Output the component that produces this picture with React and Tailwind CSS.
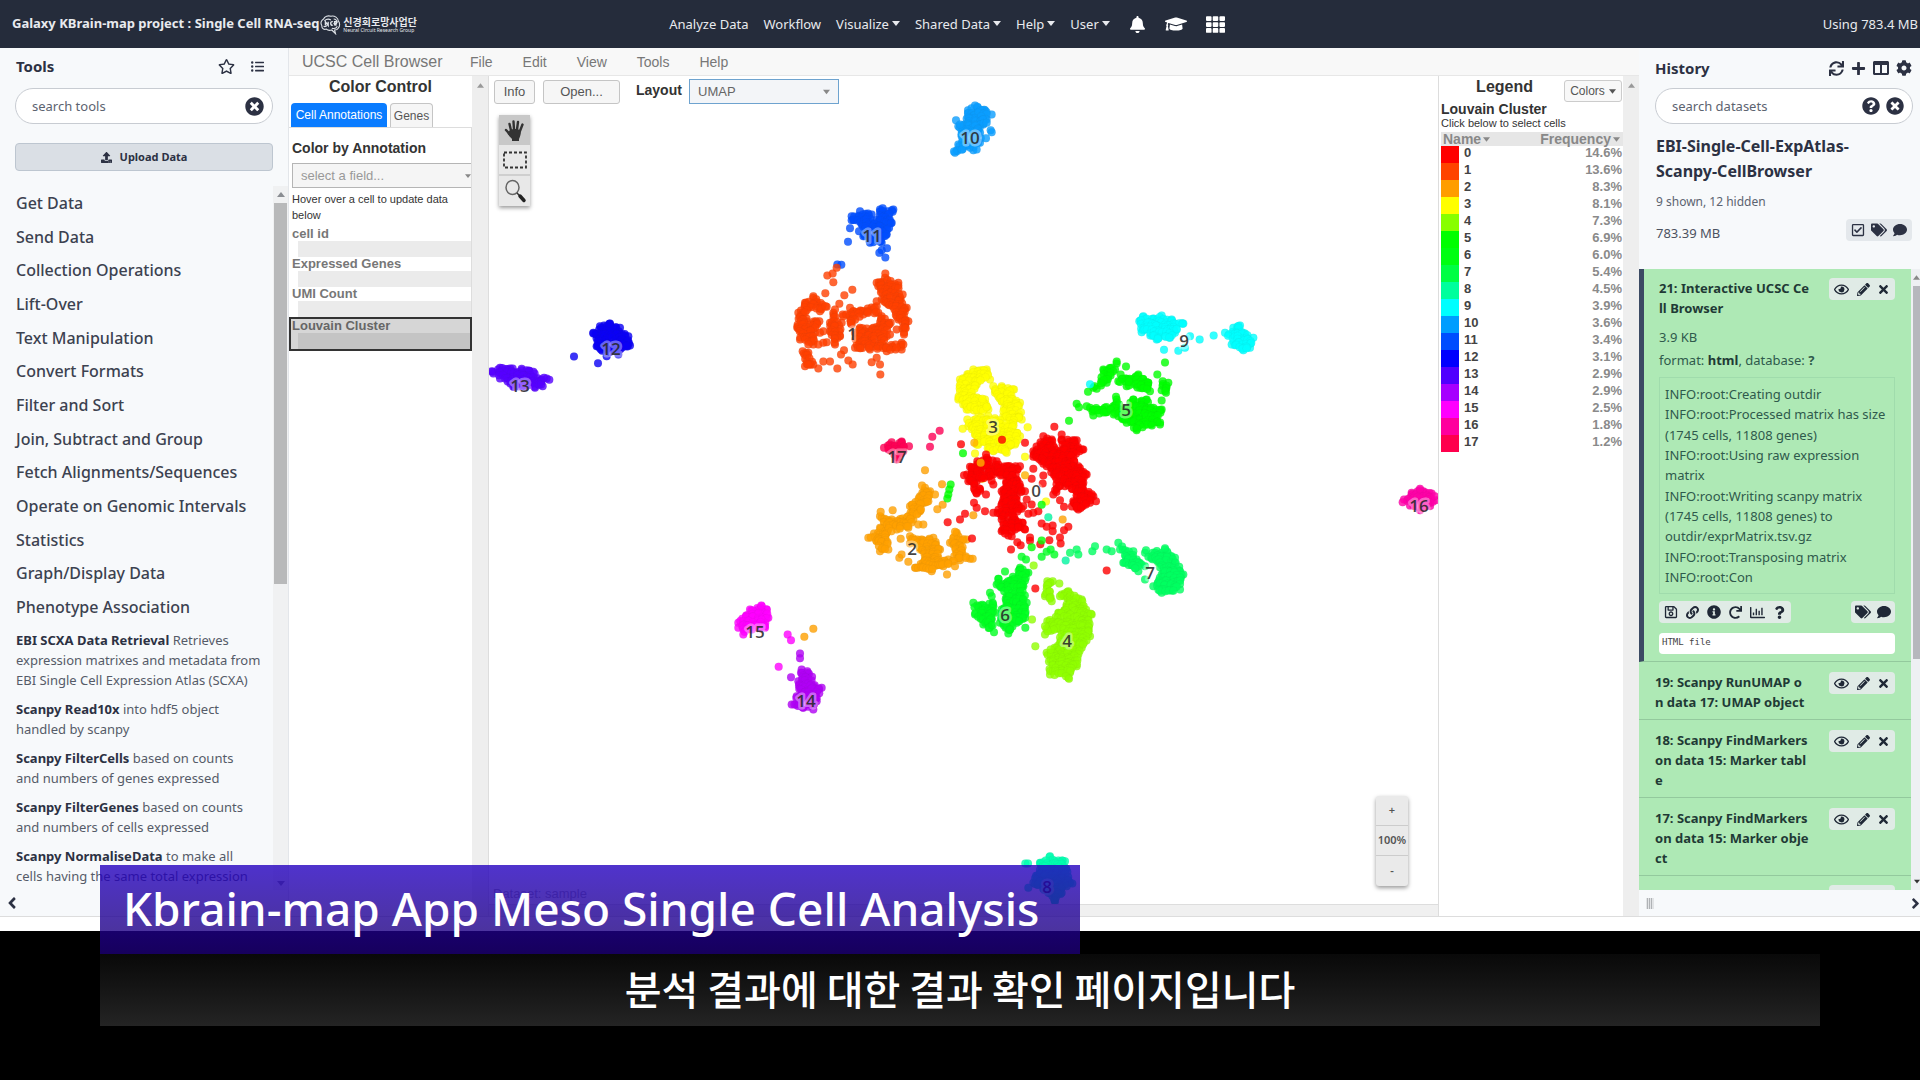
import React from "react";
import {
  FaAngleLeft,
  FaAngleRight,
  FaBell,
  FaColumns,
  FaCog,
  FaComment,
  FaGraduationCap,
  FaInfoCircle,
  FaLink,
  FaListUl,
  FaPencilAlt,
  FaPlus,
  FaQuestion,
  FaQuestionCircle,
  FaRedo,
  FaRegChartBar,
  FaRegCheckSquare,
  FaRegEye,
  FaRegSave,
  FaRegStar,
  FaSync,
  FaTags,
  FaTh,
  FaTimes,
  FaTimesCircle,
  FaUpload,
} from "react-icons/fa";

/* ------------------------------------------------------------------ data */

const toolSections = [
  "Get Data",
  "Send Data",
  "Collection Operations",
  "Lift-Over",
  "Text Manipulation",
  "Convert Formats",
  "Filter and Sort",
  "Join, Subtract and Group",
  "Fetch Alignments/Sequences",
  "Operate on Genomic Intervals",
  "Statistics",
  "Graph/Display Data",
  "Phenotype Association",
];

const tools = [
  ["EBI SCXA Data Retrieval", "Retrieves", "expression matrixes and metadata from", "EBI Single Cell Expression Atlas (SCXA)"],
  ["Scanpy Read10x", "into hdf5 object", "handled by scanpy"],
  ["Scanpy FilterCells", "based on counts", "and numbers of genes expressed"],
  ["Scanpy FilterGenes", "based on counts", "and numbers of cells expressed"],
  ["Scanpy NormaliseData", "to make all", "cells having the same total expression"],
];

const legend = [
  ["0", "14.6%", "#ff0000"],
  ["1", "13.6%", "#ff4400"],
  ["2", "8.3%", "#ff9d00"],
  ["3", "8.1%", "#ffff00"],
  ["4", "7.3%", "#88ff00"],
  ["5", "6.9%", "#00ff00"],
  ["6", "6.0%", "#00ff11"],
  ["7", "5.4%", "#00ff44"],
  ["8", "4.5%", "#00ff9d"],
  ["9", "3.9%", "#00ffff"],
  ["10", "3.6%", "#009dff"],
  ["11", "3.4%", "#004dff"],
  ["12", "3.1%", "#0000ff"],
  ["13", "2.9%", "#5000ff"],
  ["14", "2.9%", "#a600ff"],
  ["15", "2.5%", "#ff00ff"],
  ["16", "1.8%", "#ff009d"],
  ["17", "1.2%", "#ff004d"],
];

const logLines = [
  "INFO:root:Creating outdir",
  "INFO:root:Processed matrix has size",
  "(1745 cells, 11808 genes)",
  "INFO:root:Using raw expression",
  "matrix",
  "INFO:root:Writing scanpy matrix",
  "(1745 cells, 11808 genes) to",
  "outdir/exprMatrix.tsv.gz",
  "INFO:root:Transposing matrix",
  "INFO:root:Con",
];

const datasets = [
  ["19: Scanpy RunUMAP o", "n data 17: UMAP object"],
  ["18: Scanpy FindMarkers", "on data 15: Marker tabl", "e"],
  ["17: Scanpy FindMarkers", "on data 15: Marker obje", "ct"],
];

/*
 * UMAP groups. Areas are filled with evenly scattered cells, points are single
 * cells. Coordinates are thirds of a pixel from each group's origin.
 */
const A = [480, 200];
const B = [860, 320];
const C = [700, 560];

const groups = [
  { color: "#0a9dff", at: [940, 90], areas: [
    [[84, 62], [105, 48], [135, 62], [155, 75], [140, 90], [130, 105], [120, 160], [100, 182], [45, 190], [55, 165], [65, 140], [55, 110], [80, 88]],
  ], points: [[48, 92], [60, 105], [152, 122], [155, 128], [138, 146], [110, 180], [42, 186], [140, 100]] },
  { color: "#004dff", at: A, areas: [
    [[1115, 50], [1140, 35], [1175, 45], [1180, 75], [1200, 30], [1240, 30], [1235, 70], [1220, 105], [1205, 130], [1170, 130], [1150, 110], [1145, 75], [1115, 62]],
  ], points: [[1110, 86], [1137, 95], [1104, 127], [1221, 146], [1205, 152], [1198, 160], [1216, 174], [1072, 195], [1084, 196], [1208, 26]] },
  { color: "#ff4000", at: A, areas: [
    [[1000, 290], [1040, 322], [1020, 335], [985, 325], [980, 365], [1018, 365], [1005, 400], [1000, 435], [960, 420], [952, 385], [955, 340], [975, 310]],
    [[1060, 340], [1085, 370], [1080, 410], [1065, 435], [1050, 395], [1050, 370]],
    [[1088, 345], [1120, 335], [1190, 320], [1195, 340], [1150, 345], [1115, 375], [1090, 350]],
    [[1190, 250], [1215, 235], [1255, 250], [1262, 300], [1280, 325], [1285, 365], [1272, 400], [1255, 360], [1225, 315], [1205, 300]],
    [[1140, 385], [1180, 385], [1205, 350], [1232, 370], [1220, 410], [1215, 440], [1265, 430], [1265, 450], [1220, 455], [1170, 450], [1125, 445], [1125, 400]],
    [[968, 455], [985, 460], [1000, 495], [975, 500]],
  ], points: [[1042, 228], [1058, 222], [1060, 248], [1070, 205], [1036, 281], [1117, 271], [1093, 287], [1216, 222], [1078, 313], [1065, 330], [1110, 325], [1030, 395], [1020, 400], [1015, 435], [1040, 428], [1092, 452], [1083, 465], [1105, 483], [1118, 495], [1072, 507], [1015, 507], [1030, 486], [1050, 486], [1175, 488], [1190, 475], [1200, 495], [1201, 525], [1230, 405], [1250, 390], [1268, 285], [985, 435], [1190, 305], [1030, 430], [1272, 405], [1270, 435]] },
  { color: "#0a00f5", at: A, areas: [
    [[340, 400], [360, 380], [390, 372], [420, 385], [445, 410], [450, 438], [420, 450], [380, 470], [350, 440]],
  ], points: [[282, 471], [354, 491], [388, 373], [340, 402], [415, 465]] },
  { color: "#5500ff", at: A, areas: [
    [[35, 515], [60, 505], [98, 507], [105, 520], [125, 508], [160, 517], [185, 540], [188, 560], [165, 565], [100, 562], [60, 537], [40, 522]],
  ], points: [[200, 537], [208, 541], [192, 535]] },
  { color: "#ff0055", at: A, areas: [
    [[1212, 745], [1235, 728], [1265, 726], [1287, 740], [1270, 755], [1250, 780], [1230, 752]],
  ], points: [[1379, 694], [1357, 712], [1350, 742]] },
  { color: "#ffa000", at: B, areas: [
    [[60, 590], [95, 600], [145, 590], [150, 560], [180, 530], [195, 505], [210, 515], [205, 545], [180, 575], [160, 600], [145, 625], [110, 630], [80, 640], [85, 690], [60, 695], [50, 665], [25, 655], [60, 625]],
    [[150, 650], [185, 660], [220, 655], [240, 690], [235, 715], [265, 720], [290, 700], [270, 670], [290, 640], [320, 660], [305, 690], [330, 718], [300, 722], [250, 740], [215, 755], [165, 745], [195, 720], [180, 690], [150, 672]],
  ], points: [[195, 452], [186, 498], [246, 494], [225, 525], [248, 556], [232, 569], [183, 570], [98, 572], [62, 577], [175, 615], [190, 615], [122, 658], [118, 715], [145, 727], [125, 705], [261, 765], [285, 637], [340, 587], [608, 600], [338, 718], [285, 740]] },
  { color: "#ffa000", at: C, areas: [], points: [[340, 208], [313, 232]] },
  { color: "#ffff00", at: B, areas: [
    [[300, 180], [340, 150], [380, 150], [390, 180], [350, 195], [335, 225], [375, 240], [385, 270], [355, 280], [320, 270], [295, 240]],
    [[400, 200], [425, 200], [462, 210], [450, 225], [480, 250], [485, 300], [455, 310], [430, 290], [425, 245], [405, 220]],
    [[322, 300], [385, 290], [460, 310], [480, 350], [465, 375], [440, 400], [400, 395], [350, 375], [345, 345], [325, 320]],
  ], points: [[308, 328], [503, 323], [345, 402], [495, 412], [558, 546], [367, 478], [367, 238], [380, 262]] },
  { color: "#ff0000", at: B, areas: [
    [[330, 442], [380, 415], [410, 425], [405, 455], [400, 495], [385, 470], [350, 485], [378, 525], [350, 522], [325, 485], [312, 467]],
    [[415, 435], [440, 440], [480, 440], [470, 480], [495, 515], [470, 530], [490, 560], [465, 600], [425, 590], [400, 580], [430, 540], [425, 515], [440, 490], [410, 455]],
    [[520, 395], [550, 350], [575, 360], [600, 395], [605, 360], [650, 362], [670, 390], [640, 410], [655, 440], [680, 465], [670, 490], [700, 530], [690, 550], [655, 570], [612, 562], [640, 545], [650, 515], [615, 500], [580, 525], [590, 480], [560, 440], [520, 412]],
    [[425, 600], [460, 602], [488, 610], [495, 630], [465, 630], [445, 648], [425, 635]],
  ], points: [[583, 322], [605, 345], [495, 370], [303, 374], [426, 361], [352, 425], [520, 448], [550, 468], [515, 478], [548, 492], [500, 540], [515, 555], [600, 542], [342, 550], [350, 565], [375, 575], [315, 583], [300, 600], [263, 608], [336, 657], [505, 583], [520, 580], [535, 575], [545, 612], [560, 622], [578, 618], [578, 635], [625, 622], [612, 632], [472, 668], [482, 677], [510, 654], [510, 664], [541, 674], [568, 662], [600, 654], [602, 672], [453, 690], [740, 753], [526, 807], [455, 650], [708, 545], [435, 642], [378, 405]] },
  { color: "#ffb000", at: B, areas: [], points: [[362, 430], [495, 467], [343, 370]] },
  { color: "#90ff00", at: B, areas: [
    [[562, 785], [578, 785], [575, 845], [555, 830]],
    [[605, 825], [625, 815], [665, 840], [695, 885], [690, 950], [665, 985], [650, 1040], [630, 1060], [625, 1075], [570, 1065], [560, 1000], [600, 970], [600, 930], [555, 945], [562, 905], [595, 880], [620, 855]],
  ], points: [[598, 792], [516, 900], [526, 980], [521, 738], [600, 830], [627, 1078], [555, 920], [572, 990]] },
  { color: "#00ff00", at: B, areas: [
    [[700, 205], [730, 150], [770, 132], [765, 150], [740, 190], [710, 208]],
    [[782, 165], [800, 178], [835, 165], [865, 190], [870, 215], [840, 205], [800, 200], [775, 185]],
    [[908, 185], [925, 190], [918, 220], [905, 212]],
    [[820, 240], [860, 240], [880, 265], [905, 270], [900, 315], [830, 332], [800, 310], [775, 290], [740, 278], [700, 288], [690, 265], [760, 260], [770, 240], [790, 270]],
  ], points: [[770, 126], [798, 141], [892, 165], [905, 243], [768, 232], [650, 253], [657, 263], [680, 260], [684, 217], [915, 129], [627, 304], [272, 495], [268, 510], [265, 525], [262, 537], [309, 401], [545, 556], [515, 683], [545, 663]] },
  { color: "#00ff20", at: B, areas: [
    [[340, 850], [398, 850], [405, 880], [395, 900], [402, 938], [370, 915], [345, 885]],
    [[415, 778], [440, 790], [480, 745], [505, 760], [490, 800], [500, 850], [495, 895], [470, 910], [445, 942], [420, 910], [425, 870], [440, 830], [410, 795]],
  ], points: [[435, 756], [496, 925], [390, 820], [395, 830], [485, 712], [498, 720], [545, 712], [560, 697], [572, 690], [583, 705]] },
  { color: "#00ff60", at: B, areas: [
    [[775, 670], [820, 695], [830, 720], [855, 740], [835, 755], [790, 730]],
    [[855, 700], [915, 690], [945, 715], [970, 765], [960, 810], [905, 820], [880, 800], [905, 765], [895, 730], [865, 712]],
  ], points: [[630, 700], [650, 690], [655, 705], [697, 695], [705, 680], [740, 690], [755, 695], [855, 780], [915, 686], [858, 692]] },
  { color: "#00f5a0", at: B, areas: [], points: [[565, 593], [617, 723]] },
  { color: "#00ffff", at: B, areas: [
    [[838, 5], [850, -10], [880, -3], [905, -12], [935, 0], [970, 12], [945, 40], [930, 55], [890, 60], [845, 38]],
    [[1095, 40], [1120, 25], [1140, 18], [1155, 42], [1180, 55], [1170, 85], [1150, 92], [1115, 75]],
  ], points: [[912, 91], [955, 94], [975, 85], [1019, 60], [1061, 48], [990, 50], [690, 194]] },
  { color: "#b000f5", at: C, areas: [
    [[305, 330], [322, 335], [365, 385], [350, 425], [340, 450], [310, 445], [275, 435], [290, 410], [295, 365]],
  ], points: [[300, 282], [300, 296], [273, 353]] },
  { color: "#ff00ff", at: C, areas: [
    [[115, 190], [150, 150], [185, 140], [200, 150], [205, 175], [195, 205], [130, 225], [115, 205]],
  ], points: [[263, 225], [273, 242], [236, 322], [184, 138]] },
  { color: "#00ffb0", at: C, areas: [
    [[1050, 890], [1095, 905], [1110, 970], [1085, 1000], [1065, 1025], [1045, 1000], [1000, 970], [1020, 910]],
  ], points: [[976, 912], [984, 912], [1117, 972], [985, 985]] },
  { color: "#ff00a8", at: [1400, 480], areas: [
    [[12, 60], [35, 40], [60, 32], [95, 42], [108, 62], [90, 80], [60, 92], [30, 78]],
  ], points: [[8, 68], [60, 28], [104, 50]] },
];

const labels = [
  ["0", 1036, 490], ["1", 852, 333], ["2", 912, 548], ["3", 993, 426], ["4", 1067, 640],
  ["5", 1126, 409], ["6", 1005, 614], ["7", 1150, 572], ["8", 1047, 886], ["9", 1184, 340],
  ["10", 970, 137], ["11", 872, 235], ["12", 611, 348], ["13", 520, 385], ["14", 806, 700],
  ["15", 755, 631], ["16", 1419, 505], ["17", 897, 456],
];

function inside(poly, x, y) {
  let hit = false;
  for (let i = 0, j = poly.length - 1; i < poly.length; j = i++) {
    const [xi, yi] = poly[i];
    const [xj, yj] = poly[j];
    if (yi > y !== yj > y && x < ((xj - xi) * (y - yi)) / (yj - yi) + xi) hit = !hit;
  }
  return hit;
}

/* Jittered grid of cells inside a polygon, plus its corners. */
function scatter(poly, seed) {
  let s = seed;
  const rnd = () => ((s = (s * 16807) % 2147483647) / 2147483647);
  const xs = poly.map((p) => p[0]);
  const ys = poly.map((p) => p[1]);
  const out = [...poly];
  const step = 9;
  for (let y = Math.min(...ys); y <= Math.max(...ys); y += step)
    for (let x = Math.min(...xs); x <= Math.max(...xs); x += step) {
      const px = x + (rnd() - 0.5) * 12;
      const py = y + (rnd() - 0.5) * 12;
      if (inside(poly, px, py)) out.push([px, py]);
    }
  return out;
}

/* ------------------------------------------------------------ components */

function Umap() {
  return (
    <svg className="absolute inset-0 h-full w-full" viewBox="489 77 949 827" role="img" aria-label="UMAP scatter plot of Louvain clusters">
      {groups.map((g, gi) => (
        <g key={gi} fill={g.color} fillOpacity="0.8" stroke="#404040" strokeOpacity="0.04">
          {[...g.areas.flatMap((a, ai) => scatter(a, 97 + gi * 31 + ai * 7)), ...g.points].map(([x, y], i) => (
            <circle key={i} cx={g.at[0] + x / 3} cy={g.at[1] + y / 3} r="4" />
          ))}
        </g>
      ))}
      <g className="font-['Open_Sans',sans-serif] text-[17px] font-semibold" fill="#222222" fillOpacity="0.85" stroke="#ffffff" strokeOpacity="0.4" strokeWidth="5" strokeLinejoin="round" textAnchor="middle">
        {labels.map(([t, x, y]) => (
          <text key={t} x={x} y={y + 7} paintOrder="stroke">
            {t}
          </text>
        ))}
      </g>
    </svg>
  );
}

function IconButton({ label, children, className = "" }) {
  return (
    <button type="button" aria-label={label} className={`flex items-center justify-center ${className}`}>
      {children}
    </button>
  );
}

function Arrow({ dir = "down", className = "" }) {
  return (
    <svg viewBox="0 0 8 5" className={`h-[5px] w-2 shrink-0 ${className}`} fill="currentColor" aria-hidden="true">
      <path d={dir === "down" ? "M0 0h8L4 5z" : "M0 5h8L4 0z"} />
    </svg>
  );
}

function Masthead() {
  return (
    <header className="flex h-12 shrink-0 items-center bg-[#252c3b] pt-[2px] text-[13px] text-[#e8eaee]">
      <a href="#home" className="flex flex-1 items-center pb-[2px] pl-3 font-bold">
        <span className="whitespace-nowrap">Galaxy KBrain-map project : Single Cell RNA-seq</span>
        <svg viewBox="0 0 24 22" className="h-[21px] w-[22px] shrink-0" fill="none" stroke="#dfe3e8" strokeWidth="1.2" aria-hidden="true">
          <path d="M3 12c-2-3 0-6 2-7 1-3 5-4 8-3 4-1 8 2 8 5 2 2 2 6 0 8-1 2-3 2-4 2l1 4-4-4c-3 1-5 0-6-1-3 1-5-1-5-4z" />
          <path d="M6 7c2-2 5-2 7-1M16 5c2 0 4 2 4 4M5 13c2 1 3 0 4-1M14 15c3 1 5 0 6-2" />
          <path d="M7 12V8l3 4V8M15 8c-3-1-3 4 0 4M17 12V8h2v2h-2l2 2" strokeWidth="1.5" />
        </svg>
        <span className="ml-[2px] flex flex-col whitespace-nowrap">
          <span className="font-['Noto_Sans_CJK_KR',sans-serif] text-[10px] leading-[11px]">신경회로망사업단</span>
          <span className="text-[5px] font-normal leading-[6px]">Neural Circuit Research Group</span>
        </span>
      </a>
      <nav className="mr-9 flex items-center gap-[15px] whitespace-nowrap">
        <a href="#analyze">Analyze Data</a>
        <a href="#workflow">Workflow</a>
        {["Visualize", "Shared Data", "Help", "User"].map((t) => (
          <button type="button" key={t} className="flex items-center gap-[3px]">
            {t}
            <Arrow className="mb-1" />
          </button>
        ))}
        <span className="flex items-center gap-[19px] pb-[2px] pl-1 text-white">
          <IconButton label="Notifications"><FaBell size={17} /></IconButton>
          <IconButton label="Interactive tours"><FaGraduationCap size={22} /></IconButton>
          <IconButton label="Scratchbook"><FaTh size={19} /></IconButton>
        </span>
      </nav>
      <div className="flex-1 pr-[2px] text-right">Using 783.4 MB</div>
    </header>
  );
}

function ToolPanel() {
  return (
    <aside className="flex w-[289px] shrink-0 flex-col border-r border-[#e3e6ea] bg-[#f7f9fb] text-[13px] text-[#2c3143]">
      <div className="mb-1 flex h-9 items-center pl-4 pr-6">
        <h2 className="flex-1 text-[15px] font-bold">Tools</h2>
        <IconButton label="Favorites"><FaRegStar size={17} /></IconButton>
        <IconButton label="Tool list" className="ml-4"><FaListUl size={13} /></IconButton>
      </div>
      <div className="ml-[15px] mr-[15px] flex h-9 items-center rounded-full border border-[#c8ccd2] bg-white pl-4 pr-2">
        <input aria-label="search tools" placeholder="search tools" className="min-w-0 flex-1 bg-transparent pt-[2px] outline-none placeholder:text-[#5c6370]" />
        <IconButton label="Clear search"><FaTimesCircle size={19} /></IconButton>
      </div>
      <button type="button" className="ml-[15px] mr-[15px] mt-[19px] flex h-7 items-center justify-center gap-2 rounded-sm border border-[#bdc6d0] bg-[#dadfe5] text-[11px] font-bold">
        <FaUpload size={11} />
        Upload Data
      </button>
      <div className="mt-[15px] flex min-h-0 flex-1">
        <div className="min-w-0 flex-1 overflow-hidden pl-4">
          <ul className="grid h-[438px] auto-rows-fr items-center text-base font-medium text-[#3c4250]">
            {toolSections.map((t) => (
              <li key={t} className="whitespace-nowrap"><a href="#section">{t}</a></li>
            ))}
          </ul>
          <ul className="mt-[6px] flex flex-col gap-[9px] whitespace-nowrap leading-5 text-[#555b68]">
            {tools.map(([name, first, ...rest]) => (
              <li key={name}>
                <a href="#tool" className="font-bold text-[#2c3143]">{name}</a> {first}
                {rest.map((line) => (
                  <span key={line} className="block">{line}</span>
                ))}
              </li>
            ))}
          </ul>
        </div>
        <div className="flex w-[15px] flex-col items-center bg-[#f0f1f2] text-[#8a8d92]">
          <Arrow dir="up" className="my-[6px]" />
          <div className="h-[381px] w-[13px] bg-[#b8b9ba]" />
          <Arrow className="mb-1 mt-auto" />
        </div>
      </div>
      <div className="flex h-[26px] items-center pl-[3px]">
        <IconButton label="Collapse tools"><FaAngleLeft size={18} /></IconButton>
      </div>
    </aside>
  );
}

function ColorControl() {
  return (
    <section className="flex w-[200px] shrink-0 font-['Liberation_Sans',sans-serif] text-[#333]">
      <div className="flex min-w-0 flex-1 flex-col">
        <h2 className="h-[27px] text-center text-base font-bold leading-[22px]">Color Control</h2>
        <div role="tablist" className="flex gap-[3px] pl-[2px] text-xs">
          <button type="button" role="tab" aria-selected="true" className="h-6 w-[96px] rounded-t-sm bg-[#0a7cff] text-white">Cell Annotations</button>
          <button type="button" role="tab" aria-selected="false" className="h-6 w-[43px] rounded-t-sm border border-b-0 border-[#c5c5c5] bg-[#f6f6f6] text-[#555]">Genes</button>
        </div>
        <div className="border-r border-t border-[#ddd] pl-[3px]">
          <label htmlFor="field" className="block pt-3 text-sm font-bold leading-4">Color by Annotation</label>
          <div className="relative mt-[7px]">
            <select id="field" defaultValue="" className="h-[25px] w-full appearance-none border border-r-0 border-[#b5b5b5] bg-[#f5f5f5] pl-2 text-[13px] text-[#999]">
              <option value="">select a field...</option>
            </select>
            <Arrow className="pointer-events-none absolute right-0 top-[10px] h-[6px] w-[6px] text-[#888]" />
          </div>
          <p className="pb-1 pt-[3px] text-[11px] leading-4">Hover over a cell to update data below</p>
        </div>
        <dl className="text-[13px] font-bold text-[#777]">
          {["cell id", "Expressed Genes", "UMI Count"].map((t) => (
            <div key={t} className="border-r border-[#ddd]">
              <dt className="pl-[3px] leading-[14px]">{t}</dt>
              <dd className="ml-[9px] h-4 bg-[#ebebeb]" />
            </div>
          ))}
          <div className="border-2 border-[#333] bg-[#d6d6d6] text-[#666]">
            <dt className="pl-px leading-[14px]">Louvain Cluster</dt>
            <dd className="ml-[7px] h-4 bg-[#c4c4c4]" />
          </div>
        </dl>
      </div>
      <div className="flex w-[17px] justify-center border-r border-[#ddd] bg-[#eee] pt-[7px] text-[#999]">
        <Arrow dir="up" className="w-[7px]" />
      </div>
    </section>
  );
}

function PlotArea() {
  const btn = "border border-[#c5c5c5] bg-[#f6f6f6] rounded-[3px] h-6 text-[13px] text-[#555]";
  return (
    <section className="flex min-w-0 flex-1 flex-col font-['Liberation_Sans',sans-serif]">
      <div className="relative flex-1 overflow-hidden">
        <Umap />
        <div className="relative flex h-full flex-col pl-[5px] pt-[3px]">
          <div className="flex">
            <button type="button" className={`${btn} mt-px w-[41px]`}>Info</button>
            <button type="button" className={`${btn} ml-2 mt-px w-[77px]`}>Open...</button>
            <label htmlFor="layout" className="ml-4 w-[53px] text-sm font-bold leading-[22px] text-[#333]">Layout</label>
            <div className="relative">
              <select id="layout" className="h-[25px] w-[150px] appearance-none border border-[#6ea3cf] bg-[#f3f5f8] pl-2 text-[13px] text-[#666]">
                <option>UMAP</option>
              </select>
              <Arrow className="pointer-events-none absolute right-[9px] top-[10px] h-[6px] w-[7px] text-[#888]" />
            </div>
          </div>
          <div role="toolbar" aria-label="Mouse mode" className="ml-[5px] mt-[11px] flex w-[31px] flex-col bg-[#e8e8e8] shadow-[0_2px_4px_rgba(0,0,0,0.4)]">
            <IconButton label="Move" className="h-[30px] bg-[#c8c8c8]">
              <svg viewBox="0 0 22 22" className="h-[23px] w-[22px]" fill="none" stroke="#333" strokeLinecap="round" aria-hidden="true">
                <path d="M7 11 5.500 4.500M10 10 9.500 2M13 10l1-7.500M16 11.500l2.500-6.500M7 16 2 10.500" strokeWidth="2.400" />
                <path d="M6 10.500c3-1.500 7-1.500 11 .5 0 4-1 6-2 8.500v2H8v-2c-1-1.500-4-4-4.500-5.500z" fill="#333" stroke="none" />
              </svg>
            </IconButton>
            <IconButton label="Select rectangle" className="h-[29px]">
              <svg viewBox="0 0 24 18" className="h-[18px] w-6" fill="none" stroke="#333" strokeWidth="1.800" strokeDasharray="3 2" aria-hidden="true">
                <path d="M1 1.500h22v15H1z" />
              </svg>
            </IconButton>
            <IconButton label="Zoom" className="h-8 border-t-2 border-[#cfcfcf]">
              <svg viewBox="0 0 24 24" className="h-6 w-6" fill="none" aria-hidden="true">
                <ellipse cx="9.500" cy="8.500" rx="6.500" ry="7" stroke="#666" strokeWidth="1.500" />
                <path d="m14 14 3 3" stroke="#333" strokeWidth="1.500" />
                <path d="m17 17 4 4.500" stroke="#222" strokeWidth="3.500" strokeLinecap="round" />
              </svg>
            </IconButton>
          </div>
          <div className="mb-[18px] mr-[30px] mt-auto flex w-8 flex-col self-end rounded-[3px] bg-[#eaeaea] font-['Noto_Sans',sans-serif] text-[11px] font-semibold text-[#555] shadow-[0_2px_4px_rgba(0,0,0,0.4)]">
            <button type="button" aria-label="Zoom in" className="h-[30px] border-b border-[#ccc]">+</button>
            <button type="button" aria-label="Reset zoom" className="h-[30px] border-b border-[#ccc]">100%</button>
            <button type="button" aria-label="Zoom out" className="h-[30px]">-</button>
          </div>
          <p className="absolute bottom-0 left-1 text-[13px] leading-5 text-[#aaa]">Dataset: sample</p>
        </div>
      </div>
      <div className="h-3 border-t border-[#ddd] bg-[#f0f0f0]" />
    </section>
  );
}

function Legend() {
  return (
    <section className="flex w-[201px] shrink-0 border-l border-[#ddd] font-['Liberation_Sans',sans-serif] text-[#333]">
      <div className="min-w-0 flex-1 pl-[2px]">
        <div className="flex h-[26px] justify-end">
          <h2 className="mr-[31px] text-base font-bold leading-[22px]">Legend</h2>
          <button type="button" className="mr-px mt-1 flex h-[22px] w-[58px] items-center justify-center gap-1 rounded-[3px] border border-[#ccc] bg-[#f8f8f8] text-xs text-[#555]">
            Colors <Arrow className="h-1 w-[7px]" />
          </button>
        </div>
        <h3 className="text-sm font-bold leading-[14px]">Louvain Cluster</h3>
        <p className="pb-px text-[11px] leading-[14px]">Click below to select cells</p>
        <table className="mt-px w-full border-collapse text-[13px] font-bold leading-[13px]">
          <thead className="bg-[#e6e6e6] text-sm leading-[14px] text-[#888]">
            <tr>
              <th colSpan="2" className="p-0 pl-[2px] text-left">
                <button type="button" className="flex items-center gap-[2px]">Name <Arrow className="h-1 w-[7px]" /></button>
              </th>
              <th className="p-0 pr-[3px]">
                <button type="button" className="ml-auto flex items-center gap-[2px]">Frequency <Arrow className="h-1 w-[7px]" /></button>
              </th>
            </tr>
          </thead>
          <tbody>
            {legend.map(([name, freq, color]) => (
              <tr key={name} className="h-[17px] align-top">
                <td className="w-[18px] p-0" style={{ backgroundColor: color }} />
                <td className="p-0 pl-[5px] text-[#444]">{name}</td>
                <td className="p-0 pr-px text-right text-[#8a8a8a]">{freq}</td>
              </tr>
            ))}
          </tbody>
        </table>
      </div>
      <div className="flex w-4 justify-center bg-[#eee] pt-[7px] text-[#999]">
        <Arrow dir="up" className="w-[7px]" />
      </div>
    </section>
  );
}

function CellBrowser() {
  return (
    <main className="flex min-w-0 flex-1 flex-col bg-white">
      <nav className="flex h-7 shrink-0 items-center border-b border-[#e7e7e7] bg-[#f8f8f8] pl-[13px] pt-px font-['Liberation_Sans',sans-serif] text-sm text-[#777]">
        <a href="#browser" className="w-[168px] text-base">UCSC Cell Browser</a>
        <div className="flex gap-[30px]">
          {["File", "Edit", "View", "Tools", "Help"].map((t) => (
            <button type="button" key={t}>{t}</button>
          ))}
        </div>
      </nav>
      <div className="flex min-h-0 flex-1">
        <ColorControl />
        <PlotArea />
        <Legend />
      </div>
    </main>
  );
}

function ItemActions() {
  return (
    <div className="flex h-[22px] w-[66px] shrink-0 items-center justify-between rounded-sm bg-[#e0ebe6] px-[5px] text-[#1f2836]">
      <IconButton label="View data"><FaRegEye size={15} /></IconButton>
      <IconButton label="Edit attributes"><FaPencilAlt size={13} /></IconButton>
      <IconButton label="Delete"><FaTimes size={13} /></IconButton>
    </div>
  );
}

function Title({ lines }) {
  return (
    <h4 className="flex-1 whitespace-nowrap font-bold leading-5 text-[#1f3a35]">
      {lines.map((l) => (
        <span key={l} className="block">{l}</span>
      ))}
    </h4>
  );
}

function HistoryPanel() {
  return (
    <aside className="flex w-[281px] shrink-0 flex-col overflow-hidden bg-[#f7f9fb] text-[13px] text-[#2c3143]">
      <div className="flex h-10 shrink-0 items-center pl-4 pr-2">
        <h2 className="flex-1 text-[15px] font-bold">History</h2>
        <div className="flex items-center gap-[7px]">
          <IconButton label="Refresh history"><FaSync size={15} /></IconButton>
          <IconButton label="New history"><FaPlus size={15} /></IconButton>
          <IconButton label="All histories"><FaColumns size={16} /></IconButton>
          <IconButton label="History options"><FaCog size={16} /></IconButton>
        </div>
      </div>
      <div className="ml-4 mr-[7px] flex h-9 shrink-0 items-center gap-[6px] rounded-full border border-[#c8ccd2] bg-white pl-4 pr-2">
        <input aria-label="search datasets" placeholder="search datasets" className="min-w-0 flex-1 bg-transparent pt-[2px] outline-none placeholder:text-[#5c6370]" />
        <IconButton label="Search help"><FaQuestionCircle size={18} /></IconButton>
        <IconButton label="Clear search"><FaTimesCircle size={18} /></IconButton>
      </div>
      <h3 className="ml-[17px] mt-[10px] text-base font-bold leading-[25px]">
        <span className="block">EBI-Single-Cell-ExpAtlas-</span>
        <span className="block">Scanpy-CellBrowser</span>
      </h3>
      <p className="ml-[17px] mt-2 text-xs leading-5 text-[#5c6370]">9 shown, 12 hidden</p>
      <div className="ml-[17px] mr-2 mt-[7px] flex h-7 items-start">
        <p className="flex-1 pt-1 leading-5 text-[#4c5260]">783.39 MB</p>
        <div className="flex h-[22px] w-[66px] items-center justify-between rounded-sm bg-[#e4e8ec] px-[5px]">
          <IconButton label="Select items"><FaRegCheckSquare size={14} /></IconButton>
          <IconButton label="Tags"><FaTags size={16} /></IconButton>
          <IconButton label="Annotation"><FaComment size={14} /></IconButton>
        </div>
      </div>
      <div className="mt-[22px] flex min-h-0 flex-1">
        <div className="flex min-w-0 flex-1 flex-col overflow-hidden bg-[#aee9b5]">
          <article className="shrink-0 border-b border-l-[5px] border-b-[#93c99d] border-l-[#3b4a63] pb-[7px] pl-[15px] pr-4 pt-[9px] text-[#2f5a4c]">
            <div className="flex items-start">
              <Title lines={["21: Interactive UCSC Ce", "ll Browser"]} />
              <ItemActions />
            </div>
            <p className="mt-[9px] leading-5">3.9 KB</p>
            <p className="mt-[3px] leading-5">
              format: <b className="text-[#1f3a35]">html</b>, database: <a href="#database" className="font-bold">?</a>
            </p>
            <div className="mt-[7px] grid h-[217px] auto-rows-fr items-center whitespace-nowrap border border-[#a0dcac] py-[6px] pl-[5px] leading-5">
              {logLines.map((l, i) => (
                <p key={i}>{l}</p>
              ))}
            </div>
            <div className="mt-[7px] flex items-center justify-between text-[#1f2836]">
              <div className="flex h-[22px] w-[132px] items-center justify-between rounded-sm bg-[#e0ebe6] px-[5px]">
                <IconButton label="Download"><FaRegSave size={14} /></IconButton>
                <IconButton label="Copy link"><FaLink size={13} /></IconButton>
                <IconButton label="Details"><FaInfoCircle size={14} /></IconButton>
                <IconButton label="Run again"><FaRedo size={13} /></IconButton>
                <IconButton label="Visualize"><FaRegChartBar size={15} /></IconButton>
                <IconButton label="Help"><FaQuestion size={13} /></IconButton>
              </div>
              <div className="flex h-[22px] w-11 items-center justify-between rounded-sm bg-[#e0ebe6] px-1">
                <IconButton label="Tags"><FaTags size={16} /></IconButton>
                <IconButton label="Annotation"><FaComment size={14} /></IconButton>
              </div>
            </div>
            <pre className="mt-[10px] h-[21px] rounded-sm bg-white pl-[3px] font-['DejaVu_Sans_Mono',monospace] text-[9px] leading-[19px] text-[#444]">HTML file</pre>
          </article>
          {datasets.map((lines) => (
            <article key={lines[0]} className="flex shrink-0 items-start border-b border-[#93c99d] pb-[7px] pl-4 pr-4 pt-[10px]">
              <Title lines={lines} />
              <ItemActions />
            </article>
          ))}
          <article className="flex min-h-0 flex-1 justify-end overflow-hidden pr-4 pt-[9px]">
            <ItemActions />
          </article>
        </div>
        <div className="flex w-[9px] flex-col items-end bg-[#eef0f3] text-[#888]">
          <Arrow dir="up" className="my-[6px] w-[7px]" />
          <div className="h-[373px] w-[7px] bg-[#b6b7bd]" />
          <Arrow className="mb-[6px] mt-auto w-[6px] text-[#333]" />
        </div>
      </div>
      <div className="flex h-[26px] shrink-0 items-center justify-between pl-[7px]">
        <span className="flex h-[11px] w-2 gap-px bg-[#e2e4e6] px-px" aria-hidden="true">
          <i className="w-px bg-[#b0b3b6]" />
          <i className="w-px bg-[#b0b3b6]" />
          <i className="w-px bg-[#b0b3b6]" />
        </span>
        <IconButton label="Collapse history" className="-mr-1"><FaAngleRight size={17} /></IconButton>
      </div>
    </aside>
  );
}

function Captions() {
  return (
    <div className="absolute inset-x-[100px] bottom-[54px] text-white">
      <div className="flex h-[89px] w-[980px] items-center bg-linear-to-b from-[#2400c0]/80 to-[#1c0074]/80 pb-[3px] pl-[23px] font-['Noto_Sans',sans-serif] text-[46px] font-medium leading-none whitespace-nowrap">
        <span>Kbrain-map App Meso Single Cell Analysis</span>
      </div>
      <div className="flex h-[72px] items-center justify-center bg-linear-to-b from-[#090909] to-[#242424] pb-[5px] font-['Noto_Sans_CJK_KR',sans-serif] text-[40px] font-medium leading-none">
        <span>분석 결과에 대한 결과 확인 페이지입니다</span>
      </div>
    </div>
  );
}

export default function App() {
  return (
    <div className="relative flex h-screen flex-col overflow-hidden bg-black font-['Noto_Sans',sans-serif]">
      <div className="flex min-h-0 flex-1 flex-col bg-white">
        <Masthead />
        <div className="flex min-h-0 flex-1">
          <ToolPanel />
          <CellBrowser />
          <HistoryPanel />
        </div>
        <div className="h-[15px] shrink-0 border-t border-[#ddd] bg-white" />
      </div>
      <div className="h-[149px] shrink-0" />
      <Captions />
    </div>
  );
}
